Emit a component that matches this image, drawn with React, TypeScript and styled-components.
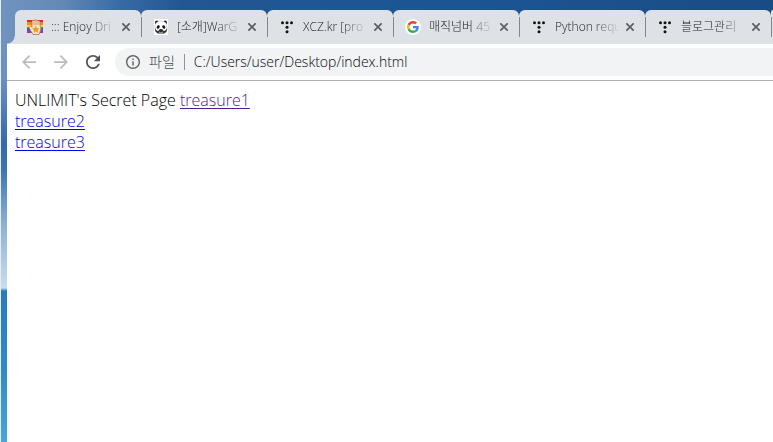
import React from "react";
import styled, { createGlobalStyle } from "styled-components";

const GlobalStyle = createGlobalStyle`
  * { box-sizing: border-box; }
  body {
    margin: 0;
    font-family: "Open Sans", "Noto Sans CJK KR", sans-serif;
    background: #fff;
  }
`;

const Desktop = styled.div`
  min-height: 100vh;
  padding-left: 6px;
  border-left: 1px solid #e4ebf2;
  background:
    linear-gradient(90deg, #7094be 0, #6389b6 60px, #376ba5 120px, #215793 180px, #1c5594 60%, #1a4c84 100%) 0 0 / 100% 44px no-repeat,
    linear-gradient(180deg, #7095be 0, #6a90bb 80px, #3669a6 145px, #3f75ae 170px, #8db1d3 225px, #c9ddee 288px, #2a7ab6 291px, #318bc2 370px, #4aa6d8 442px);
  display: flex;
  flex-direction: column;
`;

const TabStrip = styled.div`
  display: flex;
  height: 44px;
  padding: 10px 0 0 8px;
  overflow: hidden;
`;

const Tab = styled.div<{ $first?: boolean }>`
  position: relative;
  flex: 0 0 126px;
  min-width: 0;
  width: 126px;
  display: flex;
  align-items: center;
  padding: 0 7px 0 12px;
  background: #dee1e6;
  border-radius: 6px 6px 0 0;

  &::before {
    content: "";
    display: ${(p) => (p.$first ? "block" : "none")};
    position: absolute;
    left: -8px;
    bottom: 0;
    width: 8px;
    height: 8px;
    background: radial-gradient(circle at 0 0, transparent 7px, #dee1e6 8px);
  }

  &::after {
    content: "";
    position: absolute;
    right: -1px;
    top: 7px;
    width: 1px;
    height: 20px;
    background: #84878c;
    z-index: 1;
  }
`;

const NextTab = styled.div`
  flex: 1 0 2px;
  background: #dee1e6;
  border-radius: 6px 0 0 0;
`;

const Favicon = styled.svg`
  flex: none;
  width: 16px;
  height: 16px;
`;

const TabTitle = styled.span`
  flex: 1 1 0;
  min-width: 0;
  margin: 0 4px 0 8px;
  overflow: hidden;
  white-space: nowrap;
  font-size: 12px;
  font-weight: 300;
  line-height: 18px;
  color: #202327;
  mask-image: linear-gradient(90deg, #000 62%, rgba(0, 0, 0, 0.1) 100%);
`;

const IconButton = styled.button<{ $size: number; $color: string }>`
  flex: none;
  display: flex;
  align-items: center;
  justify-content: center;
  width: ${(p) => p.$size}px;
  height: ${(p) => p.$size}px;
  padding: 0;
  border: 0;
  background: none;
  color: ${(p) => p.$color};
`;

const Toolbar = styled.div`
  display: flex;
  align-items: center;
  gap: 4px;
  height: 37px;
  padding-left: 8px;
  background: #fff;
  border-bottom: 1px solid #b1b1b3;
`;

const Omnibox = styled.div`
  flex: 1;
  display: flex;
  align-items: center;
  height: 28px;
  margin-left: 4px;
  padding-left: 11px;
  border-radius: 14px 0 0 14px;
  background: #f1f3f4;
  color: #5f6368;
`;

const Scheme = styled.label`
  margin-left: 9px;
  padding-right: 9px;
  font-size: 14px;
  line-height: 16px;
  font-weight: 300;
  color: #484c51;
  border-right: 1px solid #909498;
  white-space: nowrap;
`;

const Address = styled.input`
  flex: 1;
  min-width: 0;
  margin-left: 9px;
  padding: 0;
  border: 0;
  outline: 0;
  background: none;
  color: #08090a;
  font-family: inherit;
  font-size: 14px;
  font-weight: 300;
  line-height: 20px;
`;

const Page = styled.main`
  flex: 1;
  padding: 9px 8px;
  background: #fff;
  color: #000;
  font-size: 16px;
  font-weight: 300;
  line-height: 21px;
`;

const PageLink = styled.a<{ $visited?: boolean }>`
  color: ${(p) => (p.$visited ? "#551a8b" : "#0000ee")};
  text-decoration: underline;
  text-underline-offset: 2px;
`;

const HandIcon = () => (
  <Favicon viewBox="0 0 16 16" aria-hidden="true">
    <path fill="#e3262e" d="M0 1h16v3H0z" />
    <path fill="#f58a1f" d="M0 3h16v3H0z" />
    <path fill="#f7d928" d="M0 6h16v3H0z" />
    <path fill="#4c9e57" d="M0 8h16v2H0z" />
    <path fill="#5a50c8" d="M0 9h16v3H0z" />
    <path fill="#a136b4" d="M0 12h16v2H0z" />
    <path
      d="M5 4V2q1-2 2 0 1-2.500 2-.5Q10 0 11 2q1.500-1 2 1v4l.8 1v3L12 15.500H6L3.500 11.500 2 8.500 3.500 7 5 8z"
      fill="#f5e3c8"
      stroke="#a66a2c"
      strokeWidth=".7"
    />
    <path d="M7 2.500V6M9 2v4M11 2.500V6" stroke="#a66a2c" strokeWidth=".6" fill="none" />
    <path d="m8.800 6.500 1.100 2.400 2.600.4-1.900 1.800.5 2.600-2.300-1.300-2.300 1.300.5-2.600-1.900-1.800 2.600-.4z" fill="#f59a18" />
  </Favicon>
);

const PandaIcon = () => (
  <Favicon viewBox="0 0 16 16" aria-hidden="true">
    <path fill="#fff" d="M1 0h14v16H1z" />
    <ellipse cx="3.800" cy="3.500" rx="1.800" ry="2" fill="#1c1c1c" />
    <ellipse cx="12.200" cy="3.500" rx="1.800" ry="2" fill="#1c1c1c" />
    <path d="M2 8q0-6 6-6t6 6-2.500 6h-7Q2 12 2 8z" fill="#fff" stroke="#aaa" strokeWidth=".5" />
    <path d="M2 9q1 3.500 3.500 3L6 10.500h4l.5 1.500Q13 12.500 14 9q.5 4-3 5.500H5Q1.500 13 2 9z" fill="#333" />
    <ellipse cx="5.200" cy="8" rx="1.400" ry="1.900" transform="rotate(30 5.200 8)" fill="#151515" />
    <ellipse cx="10.800" cy="8" rx="1.400" ry="1.900" transform="rotate(-30 10.800 8)" fill="#151515" />
    <path d="M6.800 10h2.400L8 11.300z" fill="#111" />
    <path d="M6 12.500q2 1.300 4 0v1.300H6z" fill="#bbb" />
  </Favicon>
);

const TistoryIcon = () => (
  <Favicon viewBox="0 0 16 16" fill="#111" aria-hidden="true">
    <circle cx="3.500" cy="3.700" r="1.500" />
    <circle cx="8" cy="3.700" r="1.500" />
    <circle cx="12.500" cy="3.700" r="1.500" />
    <circle cx="8" cy="8.200" r="1.500" />
    <circle cx="8" cy="12.700" r="1.500" />
  </Favicon>
);

const GoogleIcon = () => (
  <Favicon viewBox="0 0 16 16" aria-hidden="true">
    <circle cx="8" cy="8" r="8" fill="#fff" />
    <g transform="translate(2 2) scale(.25)">
      <path fill="#EA4335" d="M24 9.500c3.540 0 6.710 1.220 9.210 3.600l6.850-6.850C35.900 2.380 30.470 0 24 0 14.620 0 6.510 5.380 2.560 13.220l7.980 6.190C12.430 13.720 17.740 9.500 24 9.500z" />
      <path fill="#4285F4" d="M46.980 24.550c0-1.570-.15-3.090-.38-4.550H24v9.020h12.940c-.58 2.960-2.260 5.480-4.780 7.180l7.730 6c4.510-4.180 7.090-10.360 7.090-17.650z" />
      <path fill="#FBBC05" d="M10.530 28.590c-.48-1.450-.76-2.990-.76-4.590s.27-3.140.76-4.590l-7.980-6.190C.92 16.460 0 20.120 0 24c0 3.880.92 7.540 2.560 10.780l7.970-6.190z" />
      <path fill="#34A853" d="M24 48c6.480 0 11.930-2.130 15.890-5.810l-7.730-6c-2.150 1.450-4.920 2.300-8.160 2.300-6.260 0-11.570-4.220-13.470-9.910l-7.980 6.190C6.510 42.620 14.620 48 24 48z" />
    </g>
  </Favicon>
);

const CloseIcon = () => (
  <svg width="8" height="8" viewBox="0 0 8 8" stroke="currentColor" strokeWidth="1.700" aria-hidden="true">
    <path d="M.3.3l7.400 7.400M7.700.3.3 7.700" />
  </svg>
);

const ToolIcon = ({ d, box = "4 4 16 16" }: { d: string; box?: string }) => (
  <svg width="14" height="14" viewBox={box} fill="currentColor" aria-hidden="true">
    <path d={d} />
  </svg>
);

const tabs = [
  { title: "::: Enjoy Dri", Icon: HandIcon },
  { title: "[소개]WarG", Icon: PandaIcon },
  { title: "XCZ.kr [pro", Icon: TistoryIcon },
  { title: "매직넘버 45", Icon: GoogleIcon },
  { title: "Python requ", Icon: TistoryIcon },
  { title: "블로그관리", Icon: TistoryIcon },
];

const navigation = [
  { label: "Back", color: "#babcbe", d: "M20 11H7.830l5.590-5.590L12 4l-8 8 8 8 1.410-1.410L7.830 13H20v-2z" },
  { label: "Forward", color: "#babcbe", d: "M12 4l-1.410 1.410L16.170 11H4v2h12.170l-5.580 5.590L12 20l8-8z" },
  {
    label: "Reload",
    color: "#505459",
    d: "M17.650 6.350C16.200 4.900 14.210 4 12 4c-4.420 0-7.990 3.580-7.990 8s3.570 8 7.990 8c3.730 0 6.840-2.550 7.730-6h-2.080c-.82 2.330-3.040 4-5.650 4-3.310 0-6-2.690-6-6s2.690-6 6-6c1.660 0 3.140.69 4.220 1.780L13 11h7V4l-2.350 2.350z",
  },
];

export default function App() {
  return (
    <>
      <GlobalStyle />
      <Desktop>
        <TabStrip>
          {tabs.map(({ title, Icon }, i) => (
            <Tab key={title} $first={i === 0}>
              <Icon />
              <TabTitle>{title}</TabTitle>
              <IconButton $size={16} $color="#5b5f63" aria-label={`Close ${title}`}>
                <CloseIcon />
              </IconButton>
            </Tab>
          ))}
          <NextTab />
        </TabStrip>
        <Toolbar>
          {navigation.map(({ label, color, d }) => (
            <IconButton key={label} $size={28} $color={color} aria-label={label}>
              <ToolIcon d={d} />
            </IconButton>
          ))}
          <Omnibox>
            <ToolIcon
              box="2 2 20 20"
              d="M11 7h2v2h-2zm0 4h2v6h-2zm1-9C6.480 2 2 6.480 2 12s4.480 10 10 10 10-4.480 10-10S17.520 2 12 2zm0 18c-4.410 0-8-3.590-8-8s3.590-8 8-8 8 3.590 8 8-3.590 8-8 8z"
            />
            <Scheme htmlFor="address">파일</Scheme>
            <Address id="address" type="text" spellCheck={false} defaultValue="C:/Users/user/Desktop/index.html" />
          </Omnibox>
        </Toolbar>
        <Page>
          UNLIMIT's Secret Page{" "}
          <PageLink href="#treasure1" $visited>
            treasure1
          </PageLink>
          <br />
          <PageLink href="#treasure2">treasure2</PageLink>
          <br />
          <PageLink href="#treasure3">treasure3</PageLink>
        </Page>
      </Desktop>
    </>
  );
}
